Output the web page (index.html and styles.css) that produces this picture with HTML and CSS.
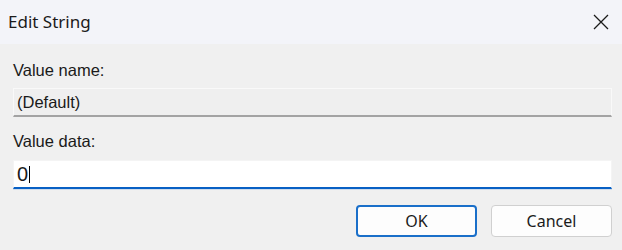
FILE: index.html
```html
<!DOCTYPE html>
<html lang="en">
  <head>
    <meta charset="UTF-8" />
    <meta name="viewport" content="width=device-width, initial-scale=1.0" />
    <link rel="stylesheet" href="styles.css">
    <title>Edit String</title>
  </head>
  <body>
    <div class="dialog">
      <div class="titlebar">
        <span class="title">Edit String</span>
        <button class="close" aria-label="Close">
          <svg width="16" height="16" viewBox="0 0 16 16">
            <path d="M1 1 L15 15 M15 1 L1 15" stroke="#1a1a1a" stroke-width="1.3" fill="none" />
          </svg>
        </button>
      </div>
      <div class="content">
        <label class="label">Value name:</label>
        <div class="field readonly">(Default)</div>
        <label class="label second">Value data:</label>
        <div class="field edit"><span class="text">0</span><span class="caret"></span></div>
        <div class="actions">
          <button class="btn primary">OK</button>
          <button class="btn">Cancel</button>
        </div>
      </div>
    </div>
  </body>
</html>
```

FILE: styles.css
```css
html,
body {
  margin: 0;
  padding: 0;
}
body {
  background-color: #f0f0f0;
  width: 622px;
  height: 250px;
  overflow: hidden;
}
.titlebar {
  height: 44px;
  background-color: #f3f4f9;
  display: flex;
  align-items: center;
  justify-content: space-between;
  padding: 0 12px 0 8px;
  box-sizing: border-box;
}
.title {
  font-family: "Noto Sans", sans-serif;
  font-size: 17px;
  color: #1b1b1b;
  margin-top: -2px;
}
.close {
  border: none;
  background: none;
  padding: 0;
  width: 16px;
  height: 16px;
  margin-right: 1px;
  margin-top: -1px;
}
.close svg {
  display: block;
}
.content {
  padding: 16px 10px 0 13px;
  display: flex;
  flex-direction: column;
}
.label {
  font-family: "Liberation Sans", Arial, sans-serif;
  font-size: 16.5px;
  color: #1a1a1a;
  line-height: 20px;
  height: 20px;
}
.second {
  margin-top: 14px;
}
.field {
  box-sizing: border-box;
  height: 29px;
  margin-top: 8px;
  padding: 0 3px;
  font-family: "Liberation Sans", Arial, sans-serif;
  font-size: 16.5px;
  color: #1a1a1a;
  display: flex;
  align-items: center;
}
.readonly {
  background-color: #efefef;
  border: 1px solid #f9f9f9;
  border-bottom: 2px solid #a3a3a3;
  padding-top: 1px;
}
.edit {
  background-color: #ffffff;
  border: 1px solid #f4f4f4;
  border-bottom: 2px solid #0860c4;
  box-shadow: 0 1px 0 #cfdcec;
  height: 29px;
  font-size: 20px;
  margin-top: 9px;
  padding-top: 1px;
}
.caret {
  display: inline-block;
  width: 1px;
  height: 17px;
  background-color: #000;
  margin-left: 1px;
}
.actions {
  display: flex;
  justify-content: flex-end;
  gap: 14px;
  margin-top: 16px;
}
.btn {
  width: 121px;
  height: 32px;
  box-sizing: border-box;
  border: 1px solid #d0d0d0;
  border-radius: 4px;
  background-color: #fdfdfd;
  font-family: "Noto Sans", sans-serif;
  font-size: 16px;
  color: #1b1b1b;
  padding: 0;
}
.primary {
  border: 2px solid #1a6fc9;
}
```
